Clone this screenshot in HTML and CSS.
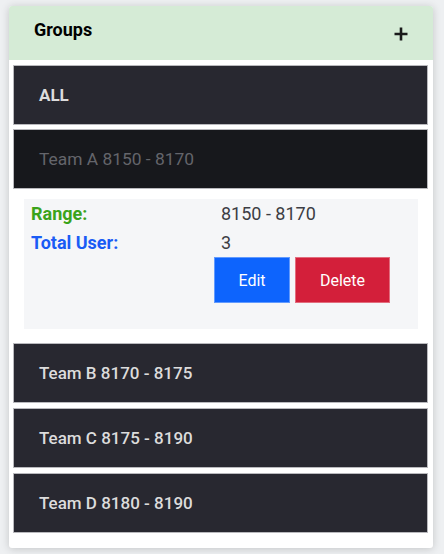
FILE: index.html
```html
<!DOCTYPE html>
<html>
<head>
<meta charset="utf-8">
<link rel="stylesheet" href="styles.css">
</head>
<body>
<div class="card">
  <div class="card-header">
    <span class="title">Groups</span>
    <svg class="plus" width="16" height="16" viewBox="0 0 16 16"><path d="M8 1.5v13M1.5 8h13" stroke="#1a1a1a" stroke-width="2.6" fill="none"/></svg>
  </div>
  <div class="list">
    <div class="item item-all">ALL</div>
    <div class="item item-active">Team A 8150 - 8170</div>
    <div class="details">
      <div class="label label-range">Range:</div>
      <div class="value">8150 - 8170</div>
      <div class="label label-users">Total User:</div>
      <div class="value">3</div>
      <div class="actions">
        <button class="btn btn-edit">Edit</button>
        <button class="btn btn-delete">Delete</button>
      </div>
    </div>
    <div class="item">Team B 8170 - 8175</div>
    <div class="item">Team C 8175 - 8190</div>
    <div class="item">Team D 8180 - 8190</div>
  </div>
</div>
</body>
</html>
```

FILE: styles.css
```css
html, body {
  margin: 0;
  padding: 0;
}
body {
  background: #eef0f2;
  font-family: Roboto, "Liberation Sans", sans-serif;
  width: 444px;
  height: 554px;
  overflow: hidden;
}
.card {
  margin: 6px 11px 0 9px;
  width: 424px;
  background: #fff;
  border-radius: 3px;
  box-shadow: 0 1px 8px rgba(0, 0, 0, 0.18);
  overflow: hidden;
}
.card-header {
  height: 54px;
  background: #d5ebd6;
  display: flex;
  align-items: center;
  justify-content: space-between;
  padding: 0 24px 0 25px;
  box-sizing: border-box;
}
.title {
  font-size: 18px;
  font-weight: 700;
  color: #000;
  margin-top: -8px;
}
.plus {
  margin-top: 1px;
}
.list {
  padding: 5px 5px 10px 4px;
  display: flex;
  flex-direction: column;
}
.item {
  height: 60px;
  box-sizing: border-box;
  border: 1px solid #b9b9bd;
  background: #282830;
  color: #dcdcdc;
  font-size: 17px;
  font-weight: 500;
  display: flex;
  align-items: center;
  padding-left: 25px;
  margin-bottom: 5px;
}
.item-all {
  margin-bottom: 4px;
  font-weight: 700;
}
.item-active {
  background: #17181c;
  color: #64656b;
  font-weight: 400;
  font-size: 17.4px;
  margin-bottom: 10px;
}
.details {
  margin: 0 10px 14px 11px;
  background: #f5f6f8;
  padding: 0 7px 26px 7px;
  display: grid;
  grid-template-columns: 183px 1fr;
  font-size: 18px;
  line-height: 29px;
}
.label {
  font-weight: 700;
}
.label-range {
  color: #3aa31a;
}
.label-users {
  color: #1a5cf5;
}
.value {
  color: #3c3d44;
  padding-left: 7px;
}
.actions {
  grid-column: 2;
  display: flex;
  gap: 5px;
}
.btn {
  height: 46px;
  padding: 0;
  border: 1px solid rgba(255, 255, 255, 0.35);
  font-family: Roboto, "Liberation Sans", sans-serif;
  font-size: 16px;
  color: #fff;
  border-radius: 0;
}
.btn-edit {
  background: #0d64fd;
  width: 76px;
}
.btn-delete {
  background: #d31f3a;
  width: 95px;
}
```
